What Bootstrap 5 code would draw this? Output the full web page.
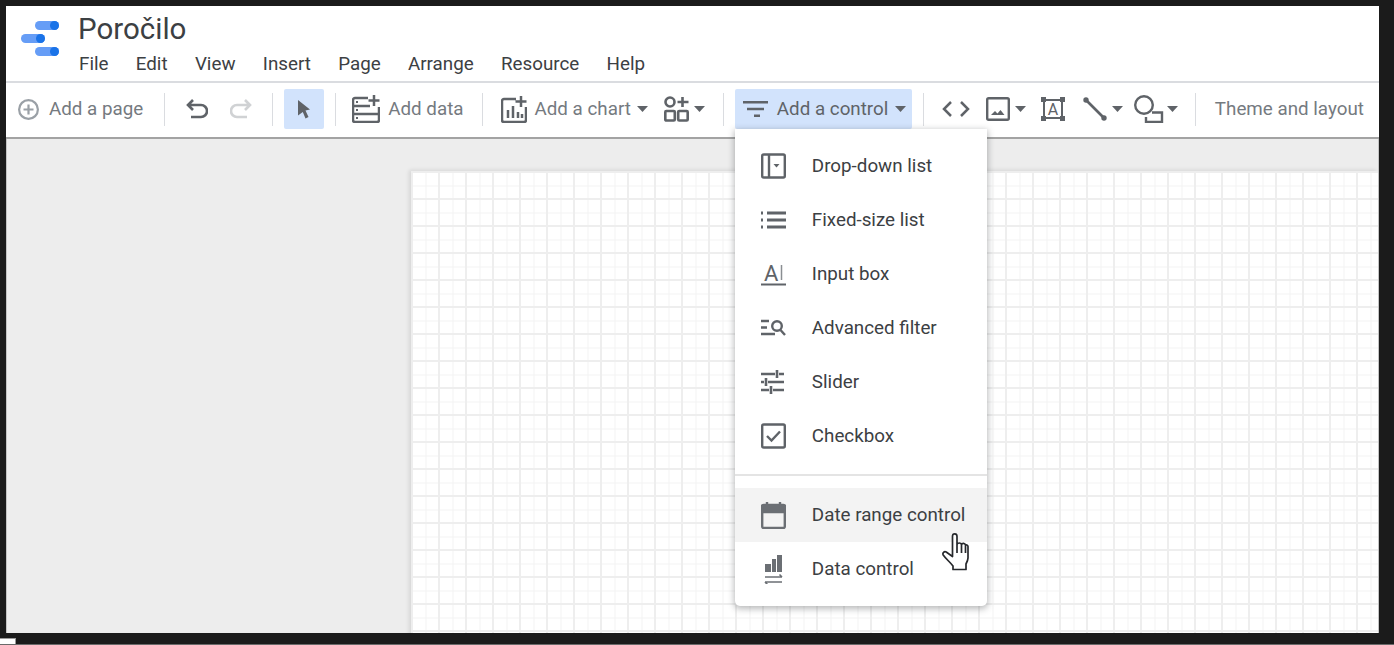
<!DOCTYPE html>
<html lang="sl">
<head>
  <meta charset="UTF-8">
  <meta name="viewport" content="width=device-width, initial-scale=1.0">
  <title>Poročilo</title>
  <link href="https://cdn.jsdelivr.net/npm/bootstrap@5.3.2/dist/css/bootstrap.min.css" rel="stylesheet">
  <script defer src="https://cdn.jsdelivr.net/npm/bootstrap@5.3.2/dist/js/bootstrap.bundle.min.js"></script>
  <style>
    html, body { height: 645px; overflow: hidden; }
    body { background: #1b1b1b; font-family: Roboto, "Liberation Sans", sans-serif; }
    .shot { padding: 6px 15px 0 6px; }
    .app { height: 627px; background: #fff; }
    .shot-foot { height: 12px; border-bottom: 1px solid #6a6a6a; }
    .foot-corner { width: 16px; height: 6px; background: #fff; border-top: 1px solid #999; border-right: 1px solid #999; }

    .top-head { height: 77px; border-bottom: 2px solid #dadce0; padding-left: 15px; }
    .logo-mark { width: 38px; height: 36px; margin-top: 14px; margin-right: 19px; }
    .doc-title { font-size: 29.5px; line-height: 32px; color: #3c4043; margin-top: 7px; }
    .menu-row { gap: 27.3px; font-size: 18.8px; line-height: 24px; color: #3c4043; margin-top: 7px; margin-left: 1px; }

    .tool-row { height: 56px; padding: 0 0 2px 12px; color: #5f6368; font-size: 18.8px; border-bottom: 2px solid #a3a3a3; }
    .tool-row svg { flex: none; display: block; }
    .tool-sep { width: 1px; height: 33px; background: #dadce0; flex: none; }
    .tool-on { background: #d2e3fc; border-radius: 2px; height: 40px; }
    .tool-on.arrow-tool { width: 40px; }
    .tool-on.control-tool { width: 177px; padding-left: 8px; }
    .tool-text { white-space: nowrap; }
    .tool-faint { color: #757a7f; }
    .ml-3 { margin-left: 3px; } .ml-5 { margin-left: 5px; } .ml-6 { margin-left: 6px; }
    .ml-7 { margin-left: 7px; } .ml-8 { margin-left: 8px; } .ml-9 { margin-left: 9px; }
    .ml-10 { margin-left: 10px; } .ml-11 { margin-left: 11px; } .ml-15 { margin-left: 15px; }
    .ml-16 { margin-left: 16px; } .ml-17 { margin-left: 17px; } .ml-18 { margin-left: 18px; }
    .ml-19 { margin-left: 19px; } .ml-20 { margin-left: 20px; } .ml-21 { margin-left: 21px; }
    .ml-22 { margin-left: 22px; }

    .canvas-area { height: 494px; background: #ededed; overflow: hidden; padding: 32px 0 0 404px; border-left: 1px solid #c4c4c4; border-right: 1px solid #c4c4c4; }
    .report-sheet {
      height: 480px;
      background-color: #fff;
      background-image:
        linear-gradient(#eeeeee 2px, transparent 2px),
        linear-gradient(90deg, #eeeeee 2px, transparent 2px),
        linear-gradient(#f3f3f3 1px, transparent 1px),
        linear-gradient(90deg, #f3f3f3 1px, transparent 1px);
      background-size: 27px 27px, 27px 27px, 13.5px 13.5px, 13.5px 13.5px;
      background-position: 0 0, 0 0, 1px 1px, 1px 1px;
      box-shadow: -2px -1px 4px rgba(0,0,0,.1);
    }

    .control-menu.dropdown-menu {
      top: 40px; left: 0; width: 252px; min-width: 0; padding: 10px 0;
      border: 0; border-radius: 0 0 5px 5px;
      box-shadow: 0 2px 6px 1px rgba(60,64,67,.35);
      font-size: 18.8px; color: #3c4043;
    }
    .control-menu .dropdown-item { height: 54px; padding: 0 0 0 26px; color: #3c4043; }
    .control-menu .dropdown-item.hovered { background: #f3f3f3; }
    .control-menu .dropdown-item svg { flex: none; margin-right: 26px; }
    .control-menu .dropdown-item svg.hand-pointer { margin: 0; position: absolute; left: 207px; top: 45px; }
    .control-menu .dropdown-divider { margin: 11px 0 12px; border-top: 2px solid #e4e4e4; opacity: 1; }
  </style>
</head>
<body>
  <svg width="0" height="0" class="position-absolute">
    <symbol id="caret" viewBox="0 0 11 6"><path d="M0 0h11L5.500 6z" fill="#5f6368"/></symbol>
  </svg>

  <div class="shot">
    <div class="app">
      <!-- header -->
      <div class="top-head d-flex">
        <svg class="logo-mark" viewBox="0 0 38 36">
          <rect x="14" y="1" width="24" height="9" rx="4.500" fill="#669df6"/><circle cx="33.500" cy="5.500" r="4.500" fill="#1a73e8"/>
          <rect x="0" y="14" width="24" height="9" rx="4.500" fill="#669df6"/><circle cx="19.500" cy="18.500" r="4.500" fill="#1a73e8"/>
          <rect x="14" y="27" width="24" height="9" rx="4.500" fill="#669df6"/><circle cx="33.500" cy="31.500" r="4.500" fill="#1a73e8"/>
        </svg>
        <div>
          <div class="doc-title">Poročilo</div>
          <div class="menu-row d-flex">
            <span>File</span><span>Edit</span><span>View</span><span>Insert</span><span>Page</span><span>Arrange</span><span>Resource</span><span>Help</span>
          </div>
        </div>
      </div>

      <!-- toolbar -->
      <div class="tool-row d-flex align-items-center">
        <svg width="21" height="21" viewBox="0 0 21 21" fill="none" stroke="#9aa0a6" stroke-width="2.200"><circle cx="10.500" cy="10.500" r="9.400"/><path d="M10.500 5.500v10M5.500 10.500h10"/></svg>
        <span class="tool-text tool-faint ml-10">Add a page</span>
        <div class="tool-sep ml-21"></div>
        <svg class="ml-21" width="22" height="22" viewBox="0 0 22 22" fill="none" stroke="#5f6368" stroke-width="2.600"><path d="M7 2 2 7l5 5M2 7h13a5.500 5.500 0 0 1 0 12H5"/></svg>
        <svg class="ml-22" width="22" height="22" viewBox="0 0 22 22" fill="none" stroke="#d0d2d4" stroke-width="2.600"><path d="m15 2 5 5-5 5M20 7H7a5.500 5.500 0 0 0 0 12h10"/></svg>
        <div class="tool-sep ml-20"></div>
        <div class="tool-on arrow-tool ml-11 d-flex align-items-center justify-content-center">
          <svg width="14" height="20" viewBox="0 0 14 20"><path d="M1 1 13 10.500 8.500 11.500 11.500 18 8.500 19.500 5.800 13 1 16.500z" fill="#5f6368"/></svg>
        </div>
        <div class="tool-sep ml-11"></div>
        <svg class="ml-16" width="28" height="28" viewBox="0 0 28 28" fill="none" stroke="#5f6368" stroke-width="2.500"><path d="M16 3H3a2 2 0 0 0-2 2v20a2 2 0 0 0 2 2h22a2 2 0 0 0 2-2V12M1 11h17M1 19h26M22 0v11M16.500 5.500h11"/><path d="M4 7h2M4 15h2M4 23h2" stroke-width="2"/></svg>
        <span class="tool-text ml-8 tool-faint">Add data</span>
        <div class="tool-sep ml-18"></div>
        <svg class="ml-18" width="26" height="27" viewBox="0 0 26 27" fill="none" stroke="#5f6368" stroke-width="2.500"><path d="M15 3H3a2 2 0 0 0-2 2v19a2 2 0 0 0 2 2h20a2 2 0 0 0 2-2V11M20 0v11M14.500 5.500h11"/><path d="M7 14v8M12 10v12M17 16v6M21 18v4"/></svg>
        <span class="tool-text ml-8 tool-faint">Add a chart</span>
        <svg class="ml-6" width="11" height="6"><use href="#caret"/></svg>
        <svg class="ml-16" width="25" height="26" viewBox="0 0 25 26" fill="none" stroke="#5f6368" stroke-width="2.600"><circle cx="6" cy="6" r="4.500"/><path d="M18.500 1v10M13.500 6h11"/><rect x="1.300" y="15" width="9.500" height="9.500" rx="1"/><rect x="14.200" y="15" width="9.500" height="9.500" rx="1"/></svg>
        <svg class="ml-5" width="11" height="6"><use href="#caret"/></svg>
        <div class="tool-sep ml-18"></div>
        <div class="position-relative ml-11">
          <div class="tool-on control-tool d-flex align-items-center">
            <svg width="25" height="16" viewBox="0 0 25 16" fill="none" stroke="#5f6368" stroke-width="2.400"><path d="M0 1.200h25M4 8h17M11 14.800h6"/></svg>
            <span class="tool-text ml-9">Add a control</span>
            <svg class="ml-7" width="11" height="6"><use href="#caret"/></svg>
          </div>
          <div class="control-menu dropdown-menu show">
            <a class="dropdown-item d-flex align-items-center" href="#">
              <svg width="25" height="26" viewBox="0 0 25 26" fill="none" stroke="#5f6368" stroke-width="2.400"><rect x="1.200" y="1.500" width="22.600" height="23" rx="1.500"/><path d="M8 1.500v23"/><path d="M12.500 11h6l-3 3.500z" fill="#5f6368" stroke="none"/></svg>
              <span>Drop-down list</span>
            </a>
            <a class="dropdown-item d-flex align-items-center" href="#">
              <svg width="25" height="18" viewBox="0 0 25 18" fill="none" stroke="#5f6368" stroke-width="2.800"><path d="M6 2h19M6 9h19M6 16h19M0 2h2M0 9h2M0 16h2"/></svg>
              <span>Fixed-size list</span>
            </a>
            <a class="dropdown-item d-flex align-items-center" href="#">
              <svg width="25" height="28" viewBox="0 -2 25 28"><text x="3" y="19" font-family="Roboto, sans-serif" font-size="22" fill="#5f6368">A</text><path d="M20.500 3v15" stroke="#8a8e92" stroke-width="1.500" fill="none"/><path d="M0 22.500h25" stroke="#5f6368" stroke-width="2" fill="none"/></svg>
              <span>Input box</span>
            </a>
            <a class="dropdown-item d-flex align-items-center" href="#">
              <svg width="25" height="18" viewBox="0 0 25 18" fill="none" stroke="#5f6368" stroke-width="2.400"><path d="M0 2h8M0 8.500h6M0 15h14"/><circle cx="16" cy="7" r="4.800"/><path d="m19.500 11 4.500 5"/></svg>
              <span>Advanced filter</span>
            </a>
            <a class="dropdown-item d-flex align-items-center" href="#">
              <svg width="25" height="24" viewBox="0 0 25 24" fill="none" stroke="#5f6368" stroke-width="2.600"><path d="M0 4h14M18 4h5M16 0v8M0 12h3M7 12h16M5 8v8M0 20h8M12 20h11M10 16v8"/></svg>
              <span>Slider</span>
            </a>
            <a class="dropdown-item d-flex align-items-center" href="#">
              <svg width="25" height="26" viewBox="0 0 25 26" fill="none" stroke="#5f6368" stroke-width="2.400"><rect x="1.200" y="1.500" width="22.600" height="23" rx="1.500"/><path d="m6 13 4.500 4.500L19 8.500"/></svg>
              <span>Checkbox</span>
            </a>
            <hr class="dropdown-divider">
            <a class="dropdown-item hovered d-flex align-items-center position-relative" href="#">
              <svg width="25" height="27" viewBox="0 0 25 27" fill="none" stroke="#6b6f74" stroke-width="2.400"><rect x="1.200" y="3" width="22.600" height="23" rx="1.500"/><path d="M1 4h23v6H1z" fill="#6b6f74"/><path d="M6 0v4M19 0v4"/></svg>
              <span>Date range control</span>
              <svg class="hand-pointer" width="27" height="38" viewBox="0 0 27 38"><path d="M10.500 3.500c0-3.500 4.500-3.500 4.500 0v8c.5-2 4-2 4.500 0 .5-1.500 3.500-1.500 4 .5.5-.5 2.500-.2 2.500 1.500V25c0 2-1 4-2 6v5.500H11V33C8 29 4 26 1.200 22c-1-2 1-4 3-3l6.300 4.500zM15 11.500V20M19.500 11.500V20M23.500 12.500V20" fill="#fff" stroke="#26282c" stroke-width="1.700" stroke-linejoin="round"/></svg>
            </a>
            <a class="dropdown-item d-flex align-items-center" href="#">
              <svg width="25" height="29" viewBox="0 0 25 29" fill="#6b6f74"><path d="M4 9h6v8H4zM11 4h4v13h-4zM16 0h5v17h-5z"/><path d="M4 22h17M18.500 19.500 21 22M21 27H4M6.500 29.500 4 27" fill="none" stroke="#6b6f74" stroke-width="1.600"/></svg>
              <span>Data control</span>
            </a>
          </div>
        </div>
        <div class="tool-sep ml-11"></div>
        <svg class="ml-18" width="28" height="16" viewBox="0 0 28 16" fill="none" stroke="#5f6368" stroke-width="2.500"><path d="M9 1 2 8l7 7M19 1l7 7-7 7"/></svg>
        <svg class="ml-16" width="24" height="24" viewBox="0 0 24 24" fill="none" stroke="#5f6368" stroke-width="2.400"><rect x="1.200" y="1.200" width="21.600" height="21.600" rx="1.500"/><path d="m5 18 4-4 2.500 2.500 3-3.500 4 5z" fill="#5f6368" stroke="none"/></svg>
        <svg class="ml-5" width="11" height="6"><use href="#caret"/></svg>
        <svg class="ml-15" width="24" height="24" viewBox="0 0 24 24" fill="none" stroke="#5f6368" stroke-width="2"><path d="M3 3h18v18H3z"/><path d="M0 0h5v5H0zM19 0h5v5h-5zM0 19h5v5H0zM19 19h5v5h-5z" fill="#5f6368" stroke="none"/><text x="12" y="18" text-anchor="middle" font-family="Roboto, sans-serif" font-size="16" fill="#5f6368" stroke="none">A</text></svg>
        <svg class="ml-18" width="24" height="24" viewBox="0 0 24 24" fill="none" stroke="#5f6368" stroke-width="2.600"><path d="M3 3l18 18"/><circle cx="3" cy="3" r="2.700" fill="#5f6368" stroke="none"/><circle cx="21" cy="21" r="2.700" fill="#5f6368" stroke="none"/></svg>
        <svg class="ml-5" width="11" height="6"><use href="#caret"/></svg>
        <svg class="ml-11" width="30" height="28" viewBox="0 0 30 28" fill="none" stroke="#5f6368" stroke-width="2.400"><circle cx="10" cy="10" r="8.800"/><path d="M18 17.500h10v9.500H12v-5"/></svg>
        <svg class="ml-3" width="11" height="6"><use href="#caret"/></svg>
        <div class="tool-sep ml-17"></div>
        <span class="tool-text tool-faint ml-19">Theme and layout</span>
      </div>

      <!-- canvas -->
      <div class="canvas-area">
        <div class="report-sheet"></div>
      </div>
    </div>
  </div>
  <div class="shot-foot d-flex align-items-end">
    <div class="foot-corner"></div>
  </div>
</body>
</html>
